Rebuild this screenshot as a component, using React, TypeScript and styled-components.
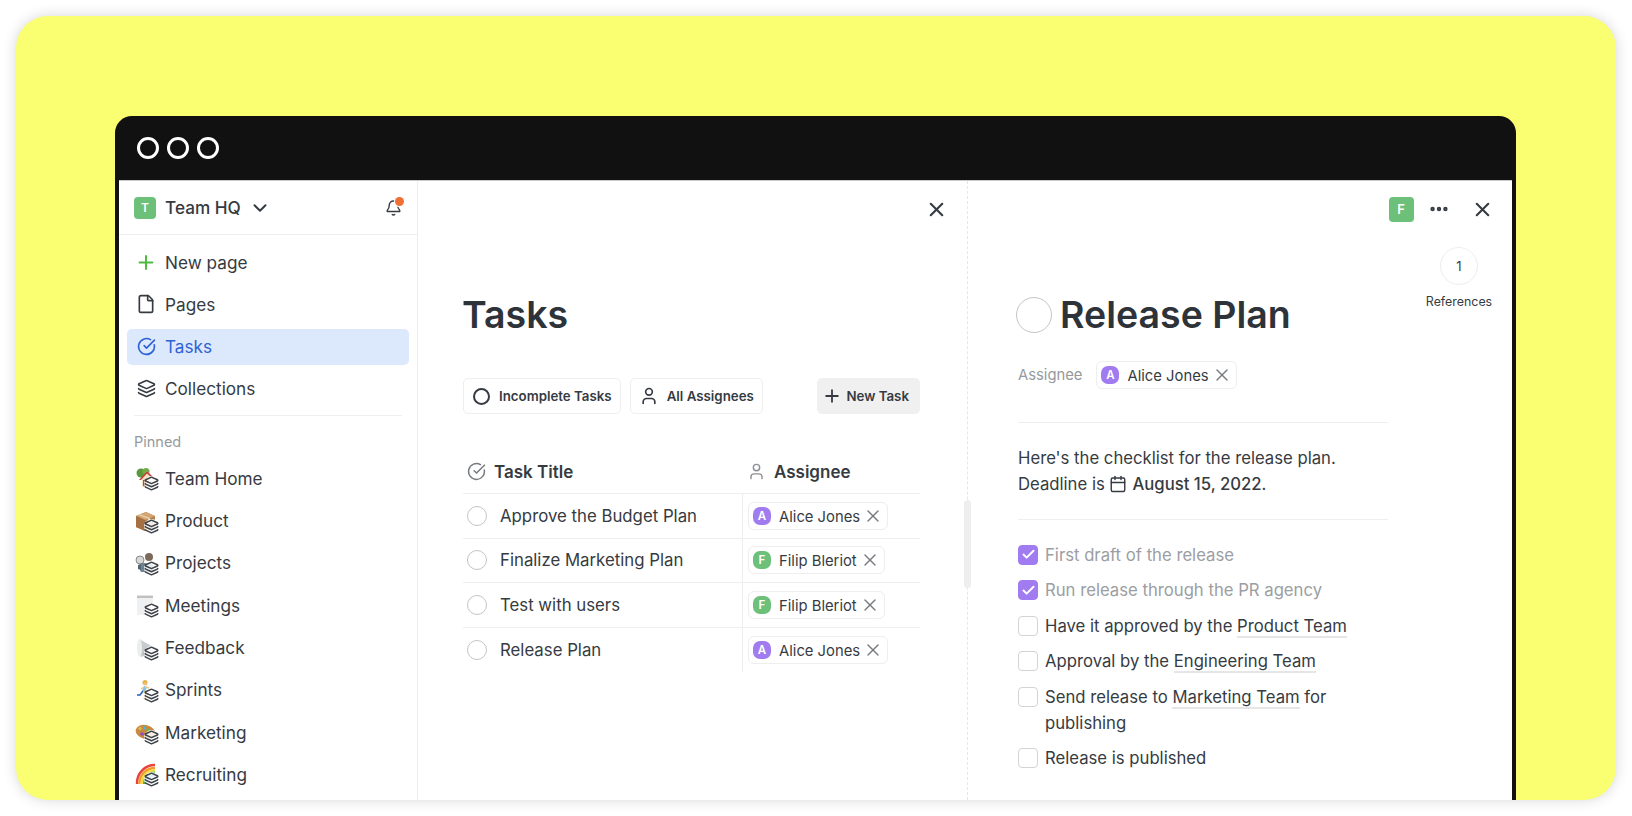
import React from "react";
import styled, { createGlobalStyle } from "styled-components";
import { Bell, Calendar, Check, ChevronDown, CircleCheckBig, Ellipsis, File, Layers, Plus, User, X } from "lucide-react";

const GlobalStyle = createGlobalStyle`
  html, body { margin: 0; padding: 0; background: #ffffff; }
  body { font-family: Inter, "Liberation Sans", sans-serif; color: #363b42; -webkit-font-smoothing: antialiased; }
`;

const Page = styled.div`
  width: 1632px;
  height: 816px;
  padding: 16px;
  box-sizing: border-box;
  overflow: hidden;
`;

const Card = styled.div`
  height: 784px;
  background: #faff71;
  border-radius: 32px;
  box-shadow: 0 0 14px rgba(0, 0, 0, 0.16);
  padding: 100px 100px 0 99px;
  box-sizing: border-box;
  overflow: hidden;
`;

const Window = styled.div`
  height: 684px;
  display: flex;
  flex-direction: column;
  background: #111111;
  border-radius: 17px 17px 0 0;
  padding: 0 4px;
  box-sizing: border-box;
`;

const TitleBar = styled.div`
  height: 64px;
  flex: none;
  display: flex;
  align-items: center;
  gap: 8px;
  padding-left: 18px;
  box-sizing: border-box;
`;

const Light = styled.span`
  width: 22px;
  height: 22px;
  border: 3.5px solid #ffffff;
  border-radius: 50%;
  box-sizing: border-box;
`;

const Body = styled.div`
  flex: 1;
  min-height: 0;
  display: flex;
  background: #ffffff;
  border-top: 1px solid #c9c9c9;
`;

const Sidebar = styled.aside`
  width: 299px;
  flex: none;
  border-right: 1px solid #eeeeee;
  box-sizing: border-box;
`;

const SidebarHead = styled.div`
  height: 54px;
  display: flex;
  align-items: center;
  padding: 0 15px;
  border-bottom: 1px solid #eeeeee;
  box-sizing: border-box;
`;

const Avatar = styled.span<{ $color: string; $size: number; $radius: number; $font: number }>`
  width: ${(p) => p.$size}px;
  height: ${(p) => p.$size}px;
  flex: none;
  display: inline-flex;
  align-items: center;
  justify-content: center;
  background: ${(p) => p.$color};
  border-radius: ${(p) => p.$radius}px;
  color: #ffffff;
  font-size: ${(p) => p.$font}px;
  font-weight: 600;
`;

const TeamName = styled.span`
  margin-left: 9px;
  font-size: 17.2px;
  font-weight: 500;
`;

const Chevron = styled.span`
  display: flex;
  margin-left: 8px;
`;

const BellWrap = styled.span`
  position: relative;
  margin-left: auto;
  width: 17px;
  height: 20px;
  display: flex;
  align-items: center;
  justify-content: center;
`;

const BellDot = styled.span`
  position: absolute;
  top: -1px;
  right: -2px;
  width: 9px;
  height: 9px;
  background: #ee6e34;
  border-radius: 50%;
  box-shadow: 0 0 0 1px #ffffff;
`;

const Nav = styled.nav<{ $top: number }>`
  display: flex;
  flex-direction: column;
  gap: 6.3px;
  padding: ${(p) => p.$top}px 8px 0;
`;

const NavItem = styled.div<{ $active?: boolean }>`
  height: 36px;
  flex: none;
  display: flex;
  align-items: center;
  gap: 8px;
  padding-left: 8px;
  border-radius: 5px;
  font-size: 17.2px;
  background: ${(p) => (p.$active ? "#dce8fb" : "transparent")};
  color: ${(p) => (p.$active ? "#2f62d5" : "inherit")};
`;

const NavIcon = styled.span`
  position: relative;
  width: 22px;
  height: 22px;
  flex: none;
  display: flex;
  align-items: center;
  justify-content: center;
`;

const StackBadge = styled.span`
  position: absolute;
  right: -2px;
  bottom: -2px;
  width: 15px;
  height: 15px;
  display: flex;
  align-items: center;
  justify-content: center;
  background: rgba(255, 255, 255, 0.85);
  border-radius: 50%;
`;

const Separator = styled.div`
  height: 1px;
  background: #eeeeee;
  margin: 8px 15px 0;
`;

const PinnedLabel = styled.div`
  font-size: 14.5px;
  color: #96999d;
  margin: 17px 15px 9.5px;
  line-height: 18px;
`;

const Middle = styled.main`
  width: 550px;
  flex: none;
  display: flex;
  flex-direction: column;
  padding: 0 47px 0 45px;
  border-right: 1px dashed #e6e6e6;
  box-sizing: border-box;
  position: relative;
`;

const ScrollThumb = styled.span`
  position: absolute;
  right: -4px;
  top: 319px;
  width: 7px;
  height: 88px;
  background: #eeeeee;
  border-radius: 4px;
`;

const TopActions = styled.div`
  height: 56px;
  flex: none;
  display: flex;
  align-items: center;
  justify-content: flex-end;
`;

const MiddleClose = styled.span`
  display: flex;
  margin-right: -28px;
`;

const PageTitle = styled.h1`
  margin: 53px 0 0 -1px;
  font-size: 37.5px;
  line-height: 50px;
  font-weight: 600;
  color: #2e3339;
`;

const Filters = styled.div`
  display: flex;
  gap: 9px;
  margin-top: 38px;
`;

const FilterButton = styled.div<{ $fill?: boolean; $lead: number; $gap: number }>`
  height: 36px;
  display: flex;
  align-items: center;
  gap: ${(p) => p.$gap}px;
  padding: 0 ${(p) => (p.$fill ? 10 : 8)}px 0 ${(p) => p.$lead}px;
  font-size: 13.3px;
  font-weight: 600;
  border-radius: 5px;
  box-sizing: border-box;
  border: 1px solid ${(p) => (p.$fill ? "#f0f0f0" : "#eeeeee")};
  background: ${(p) => (p.$fill ? "#f0f0f0" : "#ffffff")};
  margin-left: ${(p) => (p.$fill ? "auto" : "0")};
`;

const TaskGrid = styled.div`
  margin-top: 36px;
`;

const HeadRow = styled.div`
  height: 44px;
  display: grid;
  grid-template-columns: 280px 177px;
  align-items: center;
  border-bottom: 1px solid #eeeeee;
  box-sizing: border-box;
`;

const HeadCell = styled.div<{ $pad: number }>`
  display: flex;
  align-items: center;
  gap: 8px;
  padding-left: ${(p) => p.$pad}px;
  font-size: 17px;
  font-weight: 600;
`;

const TaskRow = styled.div`
  height: 44.5px;
  display: grid;
  grid-template-columns: 280px 177px;
  border-bottom: 1px solid #eeeeee;
  box-sizing: border-box;

  &:last-child {
    border-bottom: none;
  }
`;

const TitleCell = styled.div`
  display: flex;
  align-items: center;
  gap: 13px;
  padding-left: 4px;
  font-size: 16.8px;
  border-right: 1px solid #eeeeee;
`;

const AssigneeCell = styled.div`
  display: flex;
  align-items: center;
  padding-left: 5px;
`;

const Ring = styled.span<{ $size: number; $strong?: boolean }>`
  width: ${(p) => p.$size}px;
  height: ${(p) => p.$size}px;
  flex: none;
  border: ${(p) => (p.$strong ? "2px solid #363b42" : "1px solid #c4c4c4")};
  border-radius: 50%;
  box-sizing: border-box;
`;

const Chip = styled.span`
  height: 28px;
  display: inline-flex;
  align-items: center;
  padding: 0 4px;
  border: 1px solid #eeeeee;
  border-radius: 6px;
  box-sizing: border-box;
  font-size: 14.8px;
  color: #363b42;
`;

const ChipName = styled.span`
  margin: 0 3px 0 8px;
  padding-top: 2px;
`;

const Detail = styled.section`
  flex: 1;
  min-width: 0;
  position: relative;
  padding: 0 0 0 50px;
  box-sizing: border-box;
`;

const DetailActions = styled.div`
  height: 56px;
  display: flex;
  align-items: center;
  justify-content: flex-end;
  padding-right: 18px;
`;

const EllipsisSlot = styled.span`
  display: flex;
  margin: 0 21.5px 0 14px;
`;

const References = styled.div`
  position: absolute;
  top: 66px;
  right: 13px;
  width: 80px;
  display: flex;
  flex-direction: column;
  align-items: center;
`;

const RefCircle = styled.div`
  width: 38px;
  height: 38px;
  display: flex;
  align-items: center;
  justify-content: center;
  border: 1px solid #eeeeee;
  border-radius: 50%;
  box-sizing: border-box;
  font-size: 13px;
`;

const RefLabel = styled.div`
  margin-top: 9px;
  font-size: 12.4px;
`;

const DetailTitle = styled.div`
  display: flex;
  align-items: center;
  gap: 8px;
  margin: 53px 0 0 -2px;
  font-size: 37.5px;
  line-height: 50px;
  font-weight: 600;
  color: #2e3339;
`;

const AssigneeRow = styled.div`
  display: flex;
  align-items: center;
  gap: 14px;
  margin-top: 20.5px;
  font-size: 14.8px;
  color: #96999d;
  height: 28px;
`;

const Rule = styled.div<{ $top: number }>`
  width: 370px;
  height: 1px;
  margin-top: ${(p) => p.$top}px;
  background: #eeeeee;
`;

const Paragraph = styled.p`
  width: 370px;
  margin: 22px 0 0;
  font-size: 16.7px;
  line-height: 26px;
`;

const DateTag = styled.span`
  display: inline-flex;
  align-items: center;
  gap: 5px;
  font-weight: 500;
  vertical-align: bottom;
`;

const Checklist = styled.div`
  margin-top: 22px;
  display: flex;
  flex-direction: column;
  gap: 9.6px;
  width: 370px;
`;

const CheckRow = styled.div<{ $done?: boolean }>`
  display: flex;
  align-items: flex-start;
  gap: 7px;
  font-size: 16.7px;
  line-height: 26px;
  color: ${(p) => (p.$done ? "#9b9ea2" : "inherit")};
`;

const Box = styled.span<{ $done?: boolean }>`
  width: 20px;
  height: 20px;
  flex: none;
  margin-top: 3px;
  display: flex;
  align-items: center;
  justify-content: center;
  border-radius: 4px;
  box-sizing: border-box;
  border: 1px solid ${(p) => (p.$done ? "#a07cf0" : "#d4d4d4")};
  background: ${(p) => (p.$done ? "#a07cf0" : "#ffffff")};
`;

const Mention = styled.span`
  border-bottom: 2px solid #e6e6e6;
`;

const TreeHouse = () => (
  <svg width="22" height="22" viewBox="0 0 22 22">
    <circle cx="6" cy="6" r="4.5" fill="#5b9a3c" />
    <circle cx="11" cy="4.5" r="3.5" fill="#6fae48" />
    <path d="M5 13 L12 4 L20 12 L18 20 H7 V12 Z" fill="#f3e3c3" />
    <path d="M4 13 L12 4 L20 12 L18 12 L12 6.5 L6 13 Z" fill="#c2423a" />
    <rect x="8" y="13" width="3" height="6" fill="#a8512e" />
  </svg>
);

const ParcelBox = () => (
  <svg width="22" height="22" viewBox="0 0 22 22">
    <path d="M1 6 L11 2 L20 6 V17 L10 21 L1 17 Z" fill="#b5824f" />
    <path d="M1 6 L11 2 L20 6 L10 10 Z" fill="#d3a673" />
    <path d="M10 10 V21 L1 17 V6 Z" fill="#a57142" />
    <path d="M5 4.2 L15 8 V11 L13 12 V8.8 L3 5 Z" fill="#e8cfa6" />
  </svg>
);

const Projector = () => (
  <svg width="22" height="22" viewBox="0 0 22 22">
    <circle cx="5" cy="8" r="4" fill="#d8d8d8" stroke="#8a8a8a" strokeWidth="1" />
    <circle cx="14" cy="5" r="4" fill="#7a6a5c" />
    <rect x="5" y="11" width="13" height="9" rx="2" fill="#6d8392" />
    <path d="M3 13 L6 12 V18 L3 17 Z" fill="#55636d" />
  </svg>
);

const Notepad = () => (
  <svg width="22" height="22" viewBox="0 0 22 22">
    <rect x="2" y="2" width="16" height="19" rx="1" fill="#eef0f1" />
    <path d="M3 1.5 V4 M5 1.5 V4 M7 1.5 V4 M9 1.5 V4 M11 1.5 V4 M13 1.5 V4 M15 1.5 V4 M17 1.5 V4" stroke="#777" strokeWidth="0.8" />
  </svg>
);

const Megaphone = () => (
  <svg width="22" height="22" viewBox="0 0 22 22">
    <path d="M4 2 L20 11 V15 L6 20 Q2 11 4 2 Z" fill="#c9cccf" />
    <ellipse cx="4.5" cy="11" rx="2.5" ry="9" fill="#eceded" />
    <path d="M8 16 L12 15 L13 20 L10 20 Z" fill="#9ea2a6" />
  </svg>
);

const Runner = () => (
  <svg width="22" height="22" viewBox="0 0 22 22">
    <circle cx="10" cy="3.5" r="2.5" fill="#e6b547" />
    <circle cx="10.5" cy="5" r="1.6" fill="#f1c27d" />
    <path d="M9 7 L12 8 L10 13 L7 12 Z" fill="#7fc4e8" />
    <path d="M8 12 L5 16 L2 16" stroke="#2f5fb3" strokeWidth="1.6" fill="none" />
    <path d="M9 12 L11 16 L9 20" stroke="#f1c27d" strokeWidth="1.6" fill="none" />
    <path d="M10 8 L14 9 M9 8 L6 10" stroke="#f1c27d" strokeWidth="1.3" />
  </svg>
);

const Palette = () => (
  <svg width="22" height="22" viewBox="0 0 22 22">
    <ellipse cx="10.5" cy="11" rx="10" ry="7" fill="#c98a3d" transform="rotate(14 10.5 11)" />
    <circle cx="5" cy="7.5" r="1.6" fill="#e0c14a" />
    <circle cx="9.5" cy="7" r="1.7" fill="#49b3dc" />
    <circle cx="7" cy="13" r="1.8" fill="#8e4fc0" />
    <circle cx="13" cy="9" r="1.6" fill="#5fb55a" />
  </svg>
);

const Rainbow = () => (
  <svg width="22" height="22" viewBox="0 0 22 22" fill="none">
    <path d="M2 21 A18 18 0 0 1 20 2" stroke="#e8423a" strokeWidth="2.4" />
    <path d="M4.4 21 A15.6 15.6 0 0 1 20 5" stroke="#f49a2c" strokeWidth="2.4" />
    <path d="M6.8 21 A13.2 13.2 0 0 1 20 7.4" stroke="#f6dc3a" strokeWidth="2.4" />
    <path d="M9.2 21 A10.8 10.8 0 0 1 20 9.8" stroke="#57b94a" strokeWidth="2.4" />
    <path d="M11.6 21 A8.4 8.4 0 0 1 20 12.2" stroke="#3b8fe0" strokeWidth="2.4" />
  </svg>
);

const pinned = [
  { name: "Team Home", Art: TreeHouse },
  { name: "Product", Art: ParcelBox },
  { name: "Projects", Art: Projector },
  { name: "Meetings", Art: Notepad },
  { name: "Feedback", Art: Megaphone },
  { name: "Sprints", Art: Runner },
  { name: "Marketing", Art: Palette },
  { name: "Recruiting", Art: Rainbow },
];

const people = {
  alice: { name: "Alice Jones", initial: "A", color: "#a07cf0" },
  filip: { name: "Filip Bleriot", initial: "F", color: "#6cc07a" },
};

const tasks = [
  { title: "Approve the Budget Plan", who: people.alice },
  { title: "Finalize Marketing Plan", who: people.filip },
  { title: "Test with users", who: people.filip },
  { title: "Release Plan", who: people.alice },
];

const PersonChip = ({ who }: { who: { name: string; initial: string; color: string } }) => (
  <Chip>
    <Avatar $color={who.color} $size={18} $radius={7} $font={11.5}>
      {who.initial}
    </Avatar>
    <ChipName>{who.name}</ChipName>
    <X size={20} color="#777a7e" strokeWidth={1.7} />
  </Chip>
);

export default function App() {
  return (
    <>
      <GlobalStyle />
      <Page>
        <Card>
          <Window>
            <TitleBar>
              <Light />
              <Light />
              <Light />
            </TitleBar>
            <Body>
              <Sidebar>
                <SidebarHead>
                  <Avatar $color="#6cc07a" $size={22} $radius={4} $font={12}>
                    T
                  </Avatar>
                  <TeamName>Team HQ</TeamName>
                  <Chevron>
                    <ChevronDown size={22} strokeWidth={2.2} />
                  </Chevron>
                  <BellWrap>
                    <Bell size={20} strokeWidth={2} />
                    <BellDot />
                  </BellWrap>
                </SidebarHead>
                <Nav $top={9}>
                  <NavItem>
                    <NavIcon>
                      <Plus size={25} color="#4cbb3f" strokeWidth={2.2} />
                    </NavIcon>
                    New page
                  </NavItem>
                  <NavItem>
                    <NavIcon>
                      <File size={20} strokeWidth={2} />
                    </NavIcon>
                    Pages
                  </NavItem>
                  <NavItem $active>
                    <NavIcon>
                      <CircleCheckBig size={19} strokeWidth={2.1} />
                    </NavIcon>
                    Tasks
                  </NavItem>
                  <NavItem>
                    <NavIcon>
                      <Layers size={19} strokeWidth={2} />
                    </NavIcon>
                    Collections
                  </NavItem>
                </Nav>
                <Separator />
                <PinnedLabel>Pinned</PinnedLabel>
                <Nav $top={0}>
                  {pinned.map(({ name, Art }) => (
                    <NavItem key={name}>
                      <NavIcon>
                        <Art />
                        <StackBadge>
                          <Layers size={15} strokeWidth={2.4} color="#3c4248" />
                        </StackBadge>
                      </NavIcon>
                      {name}
                    </NavItem>
                  ))}
                </Nav>
              </Sidebar>
              <Middle>
                <ScrollThumb />
                <TopActions>
                  <MiddleClose>
                    <X size={23} strokeWidth={2.2} />
                  </MiddleClose>
                </TopActions>
                <PageTitle>Tasks</PageTitle>
                <Filters>
                  <FilterButton $lead={9} $gap={9}>
                    <Ring $size={17} $strong />
                    Incomplete Tasks
                  </FilterButton>
                  <FilterButton $lead={8} $gap={8}>
                    <User size={20} strokeWidth={2} />
                    All Assignees
                  </FilterButton>
                  <FilterButton $fill $lead={4} $gap={4}>
                    <Plus size={20} strokeWidth={2.2} />
                    New Task
                  </FilterButton>
                </Filters>
                <TaskGrid>
                  <HeadRow>
                    <HeadCell $pad={4}>
                      <CircleCheckBig size={19} color="#777a7e" strokeWidth={1.9} />
                      Task Title
                    </HeadCell>
                    <HeadCell $pad={4}>
                      <User size={19} color="#8d9094" strokeWidth={1.8} />
                      Assignee
                    </HeadCell>
                  </HeadRow>
                  {tasks.map((task) => (
                    <TaskRow key={task.title}>
                      <TitleCell>
                        <Ring $size={20} />
                        {task.title}
                      </TitleCell>
                      <AssigneeCell>
                        <PersonChip who={task.who} />
                      </AssigneeCell>
                    </TaskRow>
                  ))}
                </TaskGrid>
              </Middle>
              <Detail>
                <DetailActions>
                  <Avatar $color="#6cc07a" $size={25} $radius={4} $font={13}>
                    F
                  </Avatar>
                  <EllipsisSlot>
                    <Ellipsis size={22} strokeWidth={2.8} />
                  </EllipsisSlot>
                  <X size={23} strokeWidth={2.2} />
                </DetailActions>
                <References>
                  <RefCircle>1</RefCircle>
                  <RefLabel>References</RefLabel>
                </References>
                <DetailTitle>
                  <Ring $size={36} />
                  Release Plan
                </DetailTitle>
                <AssigneeRow>
                  Assignee
                  <PersonChip who={people.alice} />
                </AssigneeRow>
                <Rule $top={33} />
                <Paragraph>
                  Here's the checklist for the release plan.
                  <br />
                  Deadline is{" "}
                  <DateTag>
                    <Calendar size={18} strokeWidth={1.9} />
                    August 15, 2022
                  </DateTag>
                  .
                </Paragraph>
                <Rule $top={22} />
                <Checklist>
                  <CheckRow $done>
                    <Box $done>
                      <Check size={15} color="#ffffff" strokeWidth={3.2} />
                    </Box>
                    <span>First draft of the release</span>
                  </CheckRow>
                  <CheckRow $done>
                    <Box $done>
                      <Check size={15} color="#ffffff" strokeWidth={3.2} />
                    </Box>
                    <span>Run release through the PR agency</span>
                  </CheckRow>
                  <CheckRow>
                    <Box />
                    <span>
                      Have it approved by the <Mention>Product Team</Mention>
                    </span>
                  </CheckRow>
                  <CheckRow>
                    <Box />
                    <span>
                      Approval by the <Mention>Engineering Team</Mention>
                    </span>
                  </CheckRow>
                  <CheckRow>
                    <Box />
                    <span>
                      Send release to <Mention>Marketing Team</Mention> for
                      <br />
                      publishing
                    </span>
                  </CheckRow>
                  <CheckRow>
                    <Box />
                    <span>Release is published</span>
                  </CheckRow>
                </Checklist>
              </Detail>
            </Body>
          </Window>
        </Card>
      </Page>
    </>
  );
}
